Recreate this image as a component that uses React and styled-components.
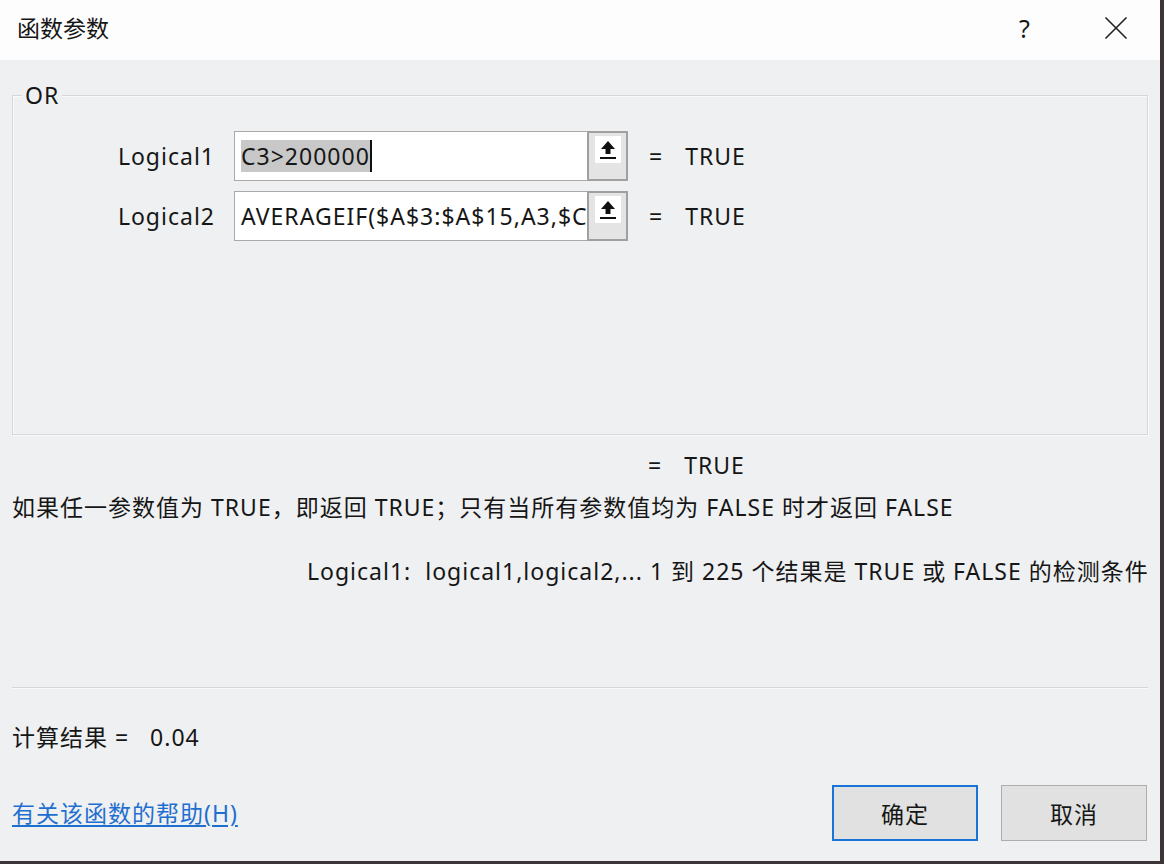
import React from "react";
import styled, { createGlobalStyle } from "styled-components";

const Global = createGlobalStyle`
  html, body { margin: 0; padding: 0; background: #3b3538; }
  body { font-family: "Noto Sans", "Noto Sans CJK SC", sans-serif; }
`;

const FONT = `"Noto Sans", "Noto Sans CJK SC", sans-serif`;

const Frame = styled.div`
  width: 1164px;
  height: 864px;
  background: #3b3538;
  overflow: hidden;
`;

const Dialog = styled.div`
  width: 1160px;
  height: 861px;
  background: #eff0f2;
  display: flex;
  flex-direction: column;
  font-family: ${FONT};
  color: #161616;
  font-size: 23px;
  letter-spacing: 1px;
`;

const TitleBar = styled.div`
  height: 60px;
  flex: none;
  background: #fdfdfd;
  display: flex;
  align-items: center;
  padding-left: 17px;
`;

const Title = styled.div`
  flex: 1;
  font-size: 23px;
  line-height: 30px;
  margin-top: -4px;
  letter-spacing: 0;
`;

const TitleButton = styled.div`
  width: ${(p) => p.$w}px;
  display: flex;
  justify-content: center;
  align-items: center;
  font-size: 25px;
  margin-top: -4px;
`;

const Body = styled.div`
  flex: 1;
  padding: 35px 12px 0 12px;
  display: flex;
  flex-direction: column;
`;

const Group = styled.div`
  position: relative;
  height: 340px;
  box-sizing: border-box;
  border: 1px solid #d6d7d9;
  box-shadow: inset 1px 1px 0 #fafafa, 1px 1px 0 #fafafa;
  padding-top: 35px;
`;

const Legend = styled.span`
  position: absolute;
  top: -16px;
  left: 9px;
  padding: 0 3px;
  background: #eff0f2;
  line-height: 30px;
`;

const ArgGrid = styled.div`
  display: grid;
  grid-template-columns: 202px 394px auto;
  column-gap: 19px;
  row-gap: 10px;
  align-items: center;
`;

const ArgLabel = styled.div`
  text-align: right;
  line-height: 30px;
`;

const Field = styled.div`
  display: flex;
  height: 50px;
`;

const TextBox = styled.div`
  flex: 1;
  min-width: 0;
  box-sizing: border-box;
  background: #ffffff;
  border: 1px solid #a9a9a9;
  border-right: none;
  padding-left: 6px;
  display: flex;
  align-items: center;
  overflow: hidden;
  white-space: nowrap;
`;

const Selected = styled.span`
  background: #c8c8c8;
  line-height: 32px;
`;

const Caret = styled.span`
  display: inline-block;
  width: 2px;
  height: 32px;
  background: #111;
  vertical-align: middle;
`;

const PickButton = styled.div`
  width: 41px;
  flex: none;
  box-sizing: border-box;
  border: 2px solid #a0a0a0;
  background: #e4e4e4;
  padding: 3px 0 0 6px;
`;

const IconBox = styled.div`
  width: 26px;
  height: 27px;
  background: #ffffff;
  display: flex;
  align-items: center;
  justify-content: center;
`;

const Equals = styled.div`
  display: flex;
  gap: 22px;
  line-height: 30px;
  padding-left: 2px;
`;

const ResultLine = styled.div`
  margin-top: 15px;
  padding-left: 634px;
`;

const Text = styled.div`
  line-height: 30px;
  margin-top: ${(p) => p.$mt || 0}px;
  padding-left: ${(p) => p.$pl || 0}px;
  white-space: nowrap;
`;

const Separator = styled.div`
  margin-top: 101px;
  height: 1px;
  background: #d6d7d9;
  box-shadow: 0 1px 0 #fafafa;
`;

const Footer = styled.div`
  margin-top: 33px;
  display: flex;
  align-items: center;
`;

const HelpLink = styled.a`
  flex: 1;
  color: #1f6fd0;
  text-decoration: underline;
  text-underline-offset: 3px;
  cursor: pointer;
  line-height: 30px;
`;

const Buttons = styled.div`
  display: flex;
  gap: 23px;
  margin-right: 1px;
`;

const DlgButton = styled.button`
  width: 146px;
  height: 56px;
  box-sizing: border-box;
  background: #e1e1e1;
  border: ${(p) => (p.$default ? "2px solid #1874d8" : "1px solid #adadad")};
  font-family: ${FONT};
  font-size: 23px;
  letter-spacing: 1px;
  color: #161616;
  padding: 0;
`;

function UpArrow() {
  return (
    <svg width="18" height="22" viewBox="0 0 18 22">
      <path d="M9 2 L16 10 L11.5 10 L11.5 15 L6.5 15 L6.5 10 L2 10 Z" fill="#111" />
      <rect x="1" y="18" width="16" height="2" fill="#111" />
    </svg>
  );
}

function CloseIcon() {
  return (
    <svg width="24" height="24" viewBox="0 0 24 24">
      <path d="M1.5 1.5 L22.5 22.5 M22.5 1.5 L1.5 22.5" stroke="#222" strokeWidth="1.6" fill="none" />
    </svg>
  );
}

function ArgRow({ label, children }) {
  return (
    <>
      <ArgLabel>{label}</ArgLabel>
      <Field>
        <TextBox>{children}</TextBox>
        <PickButton>
          <IconBox>
            <UpArrow />
          </IconBox>
        </PickButton>
      </Field>
      <Equals>
        <span>=</span>
        <span>TRUE</span>
      </Equals>
    </>
  );
}

export default function App() {
  return (
    <Frame>
      <Global />
      <Dialog>
        <TitleBar>
          <Title>函数参数</Title>
          <TitleButton $w={132}>?</TitleButton>
          <TitleButton $w={50}>
            <CloseIcon />
          </TitleButton>
          <div style={{ width: 19 }} />
        </TitleBar>
        <Body>
          <Group>
            <Legend>OR</Legend>
            <ArgGrid>
              <ArgRow label="Logical1">
                <Selected>C3&gt;200000</Selected>
                <Caret />
              </ArgRow>
              <ArgRow label="Logical2">AVERAGEIF($A$3:$A$15,A3,$C</ArgRow>
            </ArgGrid>
          </Group>
          <ResultLine>
            <Equals>
              <span>=</span>
              <span>TRUE</span>
            </Equals>
          </ResultLine>
          <Text $mt={12}>
            如果任一参数值为 TRUE，即返回 TRUE；只有当所有参数值均为 FALSE 时才返回 FALSE
          </Text>
          <Text $mt={34} $pl={295}>
            Logical1:&nbsp; logical1,logical2,... 1 到 225 个结果是 TRUE 或 FALSE 的检测条件
          </Text>
          <Separator />
          <Text $mt={34}>计算结果 =&nbsp;&nbsp; 0.04</Text>
          <Footer>
            <HelpLink>有关该函数的帮助(H)</HelpLink>
            <Buttons>
              <DlgButton $default>确定</DlgButton>
              <DlgButton>取消</DlgButton>
            </Buttons>
          </Footer>
        </Body>
      </Dialog>
    </Frame>
  );
}
